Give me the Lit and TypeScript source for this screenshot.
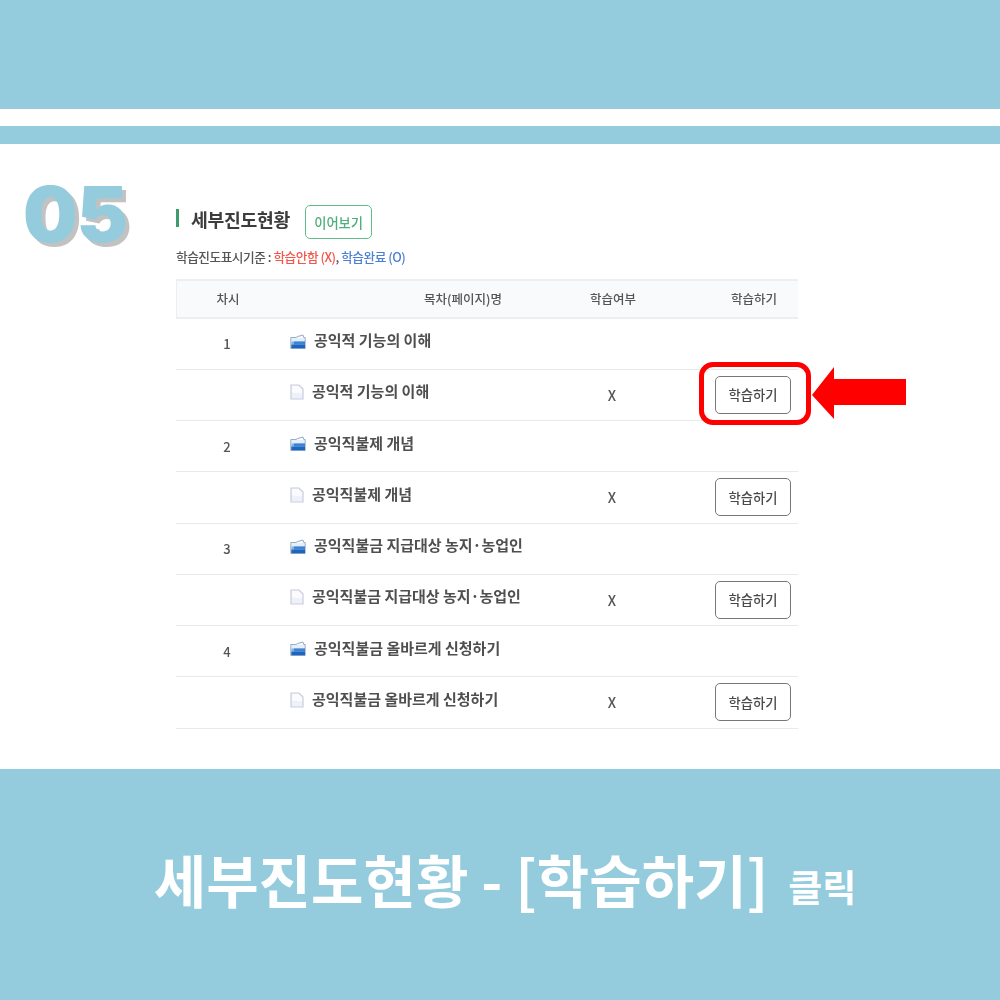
import { LitElement, css, html, svg } from "lit";
import { customElement } from "lit/decorators.js";

const chapters = [
  { no: "1", title: "공익적 기능의 이해" },
  { no: "2", title: "공익직불제 개념" },
  { no: "3", title: "공익직불금 지급대상 농지·농업인" },
  { no: "4", title: "공익직불금 올바르게 신청하기" },
];

const folderIcon = svg`<svg class="icon" width="16" height="15" viewBox="0 0 16 15">
  <path d="M.8 3.500h5.200l1.500-1 5.500-1.500.8 2.500h1.400v11h-14.400z" fill="#e6eff8" stroke="#8ea6c2" stroke-width=".9"/>
  <path d="M7 4 12.500 2.300l.5 1.700z" fill="#fff"/>
  <path d="M1.500 7.500h13.500v3h-13.500z" fill="#7fb0e6"/>
  <path d="M4 7.500h11v3h-11z" fill="#3f83d4"/>
  <path d="M1.300 10.500h13.700v3.700h-13.700z" fill="#1d66c0"/>
</svg>`;

const pageIcon = svg`<svg class="icon" width="14" height="16" viewBox="0 0 14 16">
  <path d="M1 1h8l4 4v10h-12z" fill="#eef0fa" stroke="#c9cde0" stroke-width="1.200"/>
  <path d="M2 2h6.500l3.500 3.500v4l-10-1z" fill="#fbfbfe"/>
</svg>`;

@customElement("app-root")
export class AppRoot extends LitElement {
  static styles = css`
    :host {
      display: block;
      width: 1000px;
      height: 1000px;
      position: relative;
      overflow: hidden;
      background: #fff;
      font-family: "Noto Sans CJK KR", "Noto Sans", sans-serif;
      color: #444;
    }
    .band-top { height: 109px; background: #94ccdd; }
    .band-thin { height: 18px; margin-top: 17px; background: #94ccdd; }
    .main {
      height: 625px;
      display: flex;
      box-sizing: border-box;
      padding: 61px 0 0 176px;
    }
    .num {
      position: absolute;
      left: 23px;
      top: 167px;
      font: 900 77px/94px "Inter", sans-serif;
      letter-spacing: -1px;
      color: #94ccdd;
      text-shadow: 4px 4px 0 #c2c2c2;
    }
    .content { width: 622px; filter: blur(0.5px); }
    .head { display: flex; align-items: center; height: 34px; }
    .bar { width: 3px; height: 18px; margin: -8px 12px 0 0; background: #3f9a6c; }
    .head h2 {
      margin: -6px 15px 0 0;
      font-size: 18.300px;
      font-weight: 700;
      letter-spacing: -0.3px;
      color: #3d3d3d;
    }
    .resume {
      box-sizing: border-box;
      width: 67px;
      height: 34px;
      display: flex;
      align-items: center;
      justify-content: center;
      border: 1.500px solid #62bd8b;
      border-radius: 5px;
      font-size: 13.300px;
      font-weight: 500;
      color: #4fae7b;
    }
    .legend {
      margin-top: 8px;
      height: 20px;
      line-height: 20px;
      font-size: 12.700px;
      font-weight: 500;
      letter-spacing: -0.5px;
      color: #555;
    }
    .legend .no { color: #f2564a; }
    .legend .yes { color: #4a7fd6; }
    .row {
      display: grid;
      grid-template-columns: 102px 292px 84px 144px;
      align-items: center;
      height: 51.250px;
      box-sizing: border-box;
      border-bottom: 1px solid #e9e9e9;
    }
    .row.header {
      margin-top: 12px;
      height: 39.500px;
      background: #f9fafc;
      border-top: 2px solid #eee;
      border-bottom: 2px solid #eee;
      border-left: 1px solid #eee;
      font-size: 12.500px;
      font-weight: 500;
      color: #555;
    }
    .center { text-align: center; }
    .header .toc { padding-left: 76px; text-align: center; }
    .header .act { text-align: right; padding-right: 22px; }
    .no-cell { font-size: 13px; font-weight: 500; color: #555; }
    .title {
      display: flex;
      align-items: center;
      gap: 8px;
      padding-left: 12px;
      margin-top: -8px;
      font-size: 15px;
      font-weight: 700;
      white-space: nowrap;
      color: #4f4f4f;
    }
    .icon { flex: none; margin-top: 3px; }
    .mark { font-size: 14px; font-weight: 500; color: #555; }
    .act { display: flex; justify-content: flex-end; padding-right: 7px; }
    .learn {
      box-sizing: border-box;
      width: 76px;
      height: 38px;
      display: flex;
      align-items: center;
      justify-content: center;
      border: 1.500px solid #777;
      border-radius: 5px;
      font-size: 13.300px;
      font-weight: 500;
      color: #4a4a4a;
      background: #fff;
    }
    .band-bottom {
      height: 231px;
      box-sizing: border-box;
      padding: 0 0 14px 10px;
      background: #94ccdd;
      display: flex;
      align-items: center;
      justify-content: center;
      color: #fff;
      font-weight: 700;
      font-size: 57px;
      white-space: pre;
    }
    .band-bottom small { font-size: 37px; margin-left: 20px; margin-top: 16px; }
    .ring {
      position: absolute;
      left: 699px;
      top: 362px;
      width: 112px;
      height: 63px;
      box-sizing: border-box;
      border: 5px solid #fe0000;
      border-radius: 14px;
    }
    .arrow { position: absolute; left: 810px; top: 366px; }
  `;

  render() {
    return html`
      <div class="band-top"></div>
      <div class="band-thin"></div>
      <div class="main">
        <div class="content">
          <div class="head">
            <span class="bar"></span>
            <h2>세부진도현황</h2>
            <span class="resume">이어보기</span>
          </div>
          <div class="legend">
            학습진도표시기준 : <span class="no">학습안함 (X)</span>, <span class="yes">학습완료 (O)</span>
          </div>
          <div class="row header">
            <span class="center">차시</span>
            <span class="toc">목차(페이지)명</span>
            <span class="center">학습여부</span>
            <span class="act">학습하기</span>
          </div>
          ${chapters.map(
            (c) => html`
              <div class="row">
                <span class="center no-cell">${c.no}</span>
                <span class="title">${folderIcon}${c.title}</span>
              </div>
              <div class="row">
                <span></span>
                <span class="title">${pageIcon}${c.title}</span>
                <span class="center mark">X</span>
                <span class="act"><span class="learn">학습하기</span></span>
              </div>
            `
          )}
        </div>
      </div>
      <div class="band-bottom">세부진도현황 - [학습하기]<small>클릭</small></div>
      <div class="num">05</div>
      <div class="ring"></div>
      <svg class="arrow" width="96" height="54" viewBox="0 0 96 54">
        <path d="M2 29 24 1v12h72v26h-72v14z" fill="#fe0000" />
      </svg>
    `;
  }
}
